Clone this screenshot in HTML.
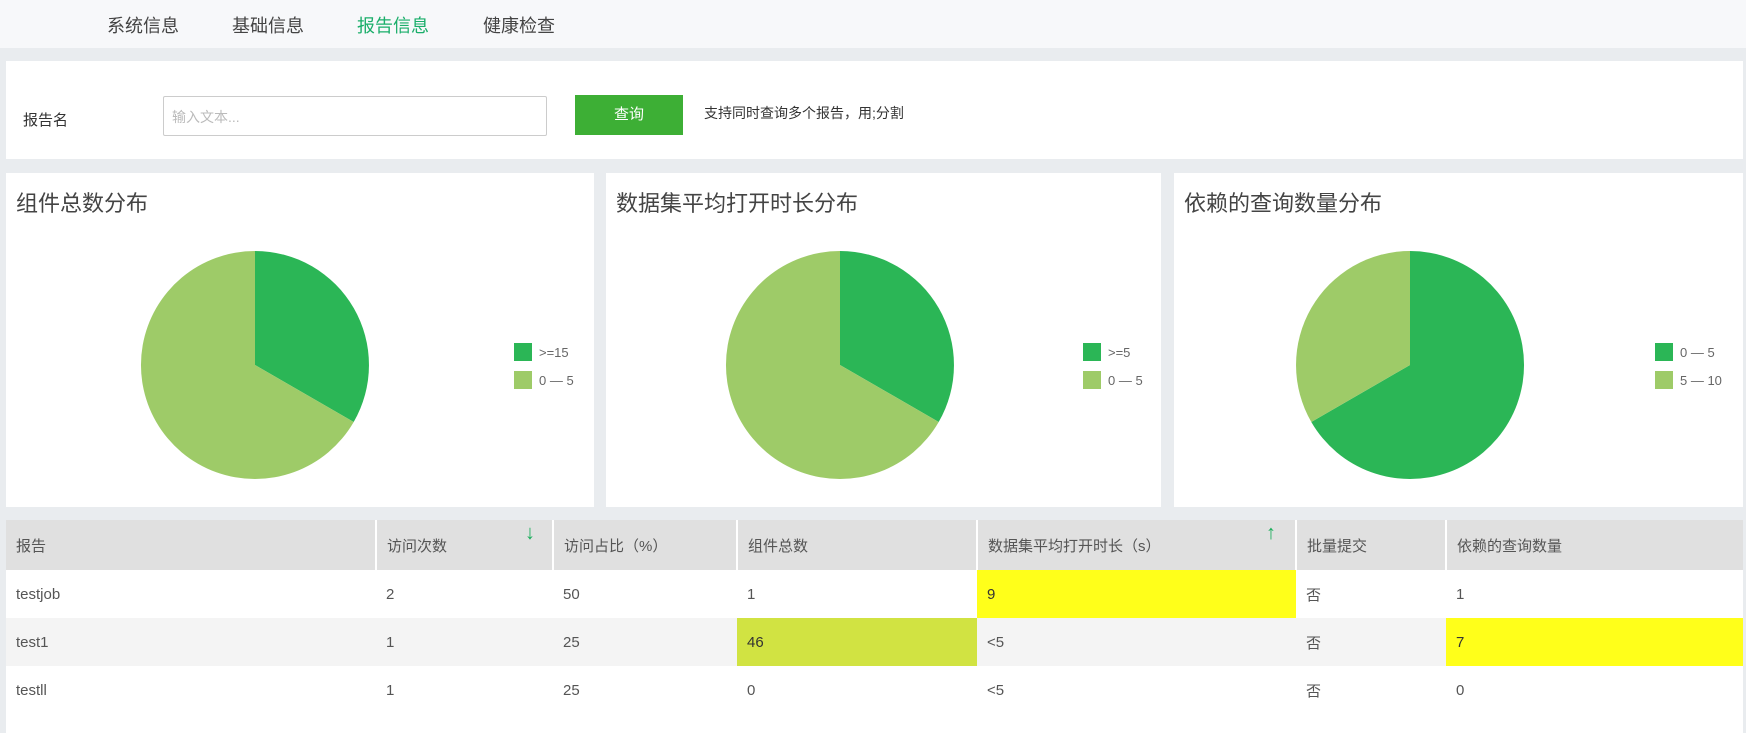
<!DOCTYPE html>
<html><head><meta charset="utf-8"><style>
*{box-sizing:border-box;margin:0;padding:0}
body{width:1746px;height:733px;background:#e9ecef;font-family:"Liberation Sans","Noto Sans CJK SC",sans-serif;position:relative;overflow:hidden;color:#555}
.abs{position:absolute}
.nav{left:0;top:0;width:1746px;height:48px;background:#f7f8fa}
.nav span{position:absolute;top:12px;font-size:18px;color:#444}
.panel{background:#fff;position:absolute}
.title{position:absolute;left:10px;top:186px;font-size:22px;color:#444}
.leg{position:absolute;font-size:13px;color:#666}
.leg i{position:absolute;left:0;width:18px;height:18px}
.leg b{position:absolute;left:25px;font-weight:normal;white-space:nowrap}
table{position:absolute;left:6px;top:520px;width:1737px;border-collapse:collapse;font-size:15px;color:#555}
th{background:#e0e0e0;height:50px;text-align:left;font-weight:normal;padding-left:10px;border-left:2px solid #fff;position:relative}
th:first-child{border-left:none}
td{height:48px;padding-left:10px}
tr.alt td{background:#f4f4f4}
.arr{position:absolute;top:2px;color:#1aae5a;font-size:20px;font-weight:bold}
</style></head><body>
<div class="abs nav">
<span style="left:107px">系统信息</span><span style="left:232px">基础信息</span><span style="left:357px;color:#1aae6a">报告信息</span><span style="left:483px">健康检查</span>
</div>
<div class="panel" style="left:6px;top:61px;width:1737px;height:98px">
<div class="abs" style="left:17px;top:48px;font-size:15px;color:#333">报告名</div>
<div class="abs" style="left:157px;top:35px;width:384px;height:40px;border:1px solid #ccc;border-radius:2px;color:#bbb;font-size:14px;padding:10px 8px">输入文本...</div>
<div class="abs" style="left:569px;top:34px;width:108px;height:40px;background:#3daf35;color:#fff;font-size:15px;text-align:center;line-height:40px">查询</div>
<div class="abs" style="left:698px;top:42px;font-size:14px;color:#333">支持同时查询多个报告，用;分割</div>
</div>

<div class="panel" style="left:6px;top:173px;width:588px;height:334px"></div>
<div class="panel" style="left:606px;top:173px;width:555px;height:334px"></div>
<div class="panel" style="left:1174px;top:173px;width:569px;height:334px"></div>
<div class="title" style="left:16px">组件总数分布</div>
<div class="title" style="left:616px">数据集平均打开时长分布</div>
<div class="title" style="left:1184px">依赖的查询数量分布</div>

<svg class="abs" style="left:0;top:0" width="1746" height="733">
<g transform="translate(255,365)">
<path d="M0,0 L0,-114 A114,114 0 0,1 98.7,57 Z" fill="#2bb656"/>
<path d="M0,0 L98.7,57 A114,114 0 1,1 0,-114 Z" fill="#9ecb68"/>
</g>
<g transform="translate(840,365)">
<path d="M0,0 L0,-114 A114,114 0 0,1 98.7,57 Z" fill="#2bb656"/>
<path d="M0,0 L98.7,57 A114,114 0 1,1 0,-114 Z" fill="#9ecb68"/>
</g>
<g transform="translate(1410,365)">
<path d="M0,0 L0,-114 A114,114 0 1,1 -98.7,57 Z" fill="#2bb656"/>
<path d="M0,0 L-98.7,57 A114,114 0 0,1 0,-114 Z" fill="#9ecb68"/>
</g>
</svg>

<div class="leg" style="left:514px;top:343px"><i style="top:0;background:#2bb656"></i><b style="top:2px">&gt;=15</b><i style="top:28px;background:#9ecb68"></i><b style="top:30px">0 — 5</b></div>
<div class="leg" style="left:1083px;top:343px"><i style="top:0;background:#2bb656"></i><b style="top:2px">&gt;=5</b><i style="top:28px;background:#9ecb68"></i><b style="top:30px">0 — 5</b></div>
<div class="leg" style="left:1655px;top:343px"><i style="top:0;background:#2bb656"></i><b style="top:2px">0 — 5</b><i style="top:28px;background:#9ecb68"></i><b style="top:30px">5 — 10</b></div>

<div class="panel" style="left:6px;top:520px;width:1737px;height:213px"></div>
<table>
<colgroup><col style="width:370px"><col style="width:177px"><col style="width:184px"><col style="width:240px"><col style="width:319px"><col style="width:150px"><col></colgroup>
<tr><th>报告</th><th>访问次数<span class="arr" style="left:148px">↓</span></th><th>访问占比（%）</th><th>组件总数</th><th>数据集平均打开时长（s）<span class="arr" style="left:288px">↑</span></th><th>批量提交</th><th>依赖的查询数量</th></tr>
<tr><td>testjob</td><td>2</td><td>50</td><td>1</td><td style="background:#ffff1a;color:#333">9</td><td>否</td><td>1</td></tr>
<tr class="alt"><td>test1</td><td>1</td><td>25</td><td style="background:#d1e342;color:#333">46</td><td>&lt;5</td><td>否</td><td style="background:#ffff1a;color:#333">7</td></tr>
<tr><td>testll</td><td>1</td><td>25</td><td>0</td><td>&lt;5</td><td>否</td><td>0</td></tr>
</table>
</body></html>
